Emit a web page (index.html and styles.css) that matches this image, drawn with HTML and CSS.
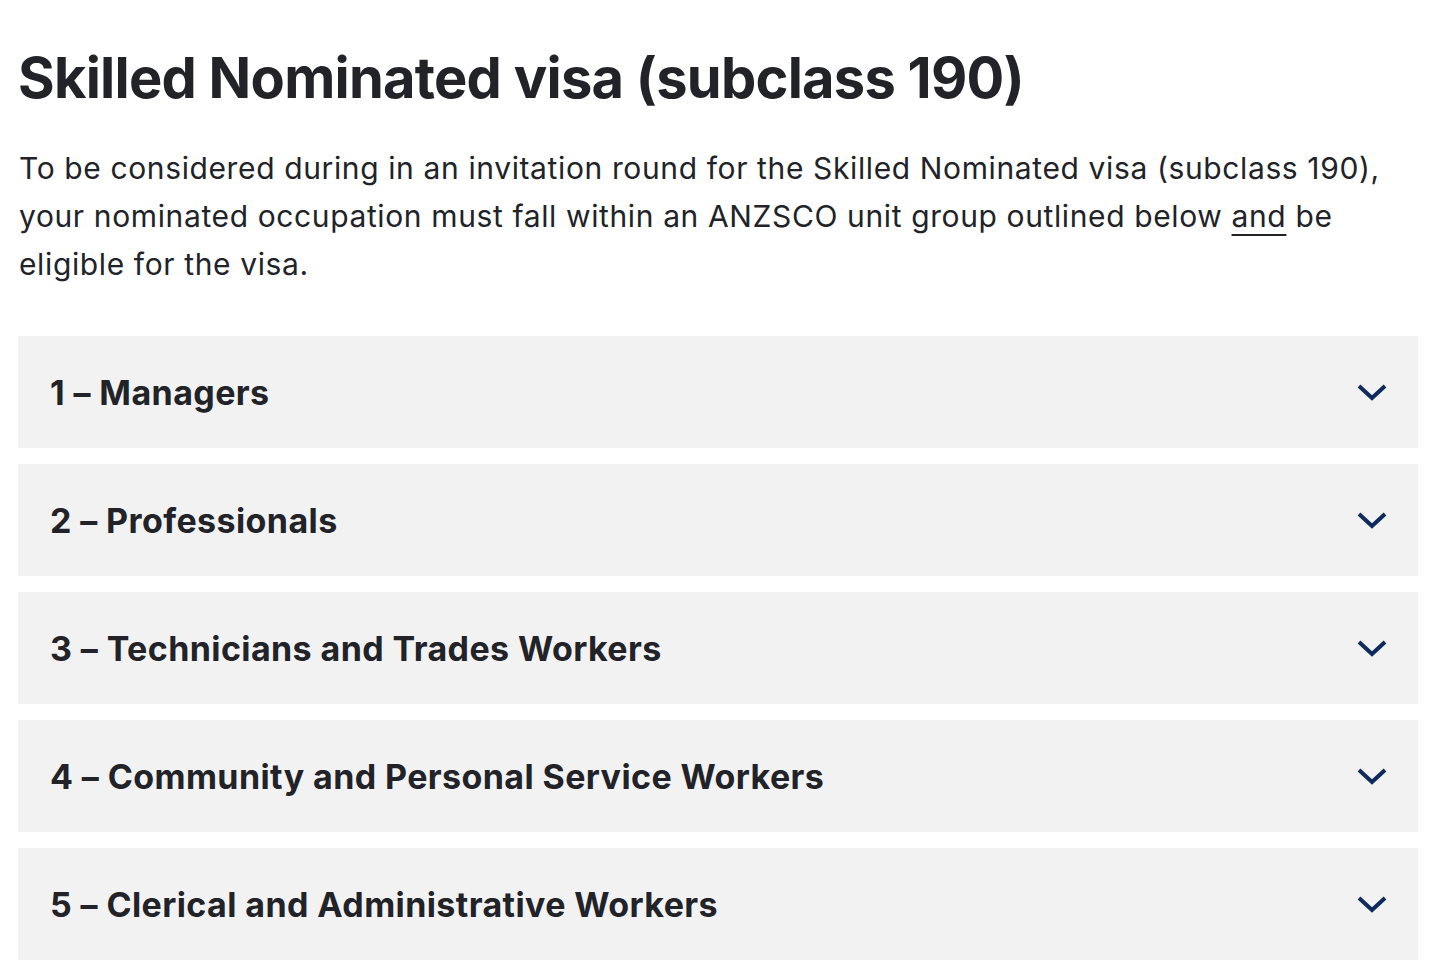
FILE: index.html
```html
<!DOCTYPE html>
<html lang="en">
<head>
    <meta charset="UTF-8">
    <meta name="viewport" content="width=device-width, initial-scale=1.0">
    <title>Skilled Nominated visa (subclass 190)</title>
    <link rel="stylesheet" href="styles.css">
</head>
<body>
    <main class="page">
        <h1 class="page-title">Skilled Nominated visa (subclass 190)</h1>
        <p class="intro">
            To be considered during in an invitation round for the Skilled Nominated visa (subclass 190),
            your nominated occupation must fall within an ANZSCO unit group outlined below <u>and</u> be
            eligible for the visa.
        </p>

        <div class="accordion">
            <div class="accordion-item">
                <button class="accordion-toggle" type="button">
                    <span>1 – Managers</span>
                    <svg class="chevron" viewBox="0 0 32 32" width="32" height="32"><path d="M3 10l13 12 13-12"/></svg>
                </button>
            </div>
            <div class="accordion-item">
                <button class="accordion-toggle" type="button">
                    <span>2 – Professionals</span>
                    <svg class="chevron" viewBox="0 0 32 32" width="32" height="32"><path d="M3 10l13 12 13-12"/></svg>
                </button>
            </div>
            <div class="accordion-item">
                <button class="accordion-toggle" type="button">
                    <span>3 – Technicians and Trades Workers</span>
                    <svg class="chevron" viewBox="0 0 32 32" width="32" height="32"><path d="M3 10l13 12 13-12"/></svg>
                </button>
            </div>
            <div class="accordion-item">
                <button class="accordion-toggle" type="button">
                    <span>4 – Community and Personal Service Workers</span>
                    <svg class="chevron" viewBox="0 0 32 32" width="32" height="32"><path d="M3 10l13 12 13-12"/></svg>
                </button>
            </div>
            <div class="accordion-item">
                <button class="accordion-toggle" type="button">
                    <span>5 – Clerical and Administrative Workers</span>
                    <svg class="chevron" viewBox="0 0 32 32" width="32" height="32"><path d="M3 10l13 12 13-12"/></svg>
                </button>
            </div>
        </div>
    </main>
</body>
</html>
```

FILE: styles.css
```css
body {
    margin: 0;
    font-family: "Inter", "Noto Sans", sans-serif;
    color: #212328;
    background: #ffffff;
}
.page {
    padding: 0 32px 0 18px;
}
.page-title {
    margin: 0;
    padding-top: 44px;
    font-size: 56px;
    line-height: 68px;
    font-weight: 700;
    letter-spacing: -0.75px;
}
.intro {
    margin: 32px 0 0 1px;
    font-size: 30px;
    line-height: 48px;
    letter-spacing: 0.62px;
}
.intro u {
    text-underline-offset: 7px;
    text-decoration-thickness: 2px;
}
.accordion {
    display: flex;
    flex-direction: column;
    gap: 16px;
    margin-top: 48px;
}
.accordion-item {
    background: #f2f2f2;
}
.accordion-toggle {
    display: flex;
    align-items: center;
    justify-content: space-between;
    width: 100%;
    height: 112px;
    padding: 0 30px 0 32px;
    border: none;
    background: transparent;
    font-family: inherit;
    font-size: 34px;
    font-weight: 700;
    letter-spacing: 0.4px;
    color: #212328;
    text-align: left;
    cursor: pointer;
}
.chevron {
    fill: none;
    stroke: #0f2a5c;
    stroke-width: 4;
}
```
